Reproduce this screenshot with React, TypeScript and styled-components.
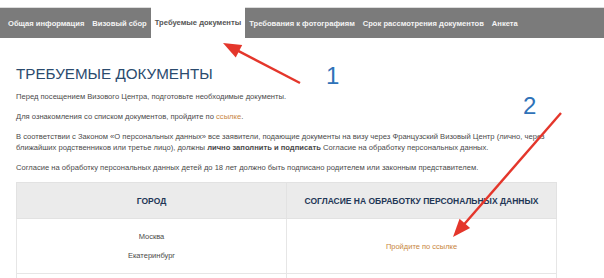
import React from 'react';
import styled, { createGlobalStyle } from 'styled-components';

const GlobalStyle = createGlobalStyle`
	body {
		margin: 0;
		background: #fff;
	}
`;

const Page = styled.div`
	position: relative;
	width: 604px;
	height: 278px;
	overflow: hidden;
	font-family: 'Liberation Sans', Arial, sans-serif;
`;

const TopStrip = styled.div`
	height: 7px;
	border-bottom: 1px solid #dcdcdc;
`;

const Nav = styled.nav`
	display: flex;
	height: 30px;
	padding-left: 4px;
	background: #7b7b7b;
`;

const Tab = styled.a<{ $active?: boolean }>`
	display: flex;
	align-items: center;
	padding: 0 4px;
	margin-top: ${({ $active }) => ($active ? '-1px' : '0')};
	height: ${({ $active }) => ($active ? '31px' : '30px')};
	background: ${({ $active }) => ($active ? '#fff' : 'transparent')};
	color: ${({ $active }) => ($active ? '#555' : '#f4f4f4')};
	font-size: 7.6px;
	font-weight: bold;
	white-space: nowrap;
	text-decoration: none;
`;

const Content = styled.main`
	padding: 0 16px;
	width: 541px;
`;

const Title = styled.h1`
	margin: 26px 0 7px;
	font-size: 15.2px;
	font-weight: normal;
	line-height: 20px;
	color: #2b4b6e;
`;

const Para = styled.p`
	margin: 0 0 9px;
	font-size: 7.6px;
	line-height: 11px;
	color: #4a4a4a;
`;

const Link = styled.a`
	color: #c8863e;
	text-decoration: none;
`;

const Table = styled.table`
	width: 541px;
	border-collapse: collapse;
	table-layout: fixed;
`;

const Th = styled.th`
	height: 35px;
	padding: 0 6px;
	background: #ebebeb;
	border: 1px solid #e2e2e2;
	font-size: 8.5px;
	font-weight: bold;
	color: #1f3756;
	text-align: center;
`;

const Td = styled.td`
	height: 54px;
	padding: 0 6px;
	border: 1px solid #e6e6e6;
	font-size: 7.5px;
	color: #4a4a4a;
	text-align: center;
	vertical-align: middle;
`;

const City = styled.div`
	line-height: 19px;
`;

const Overlay = styled.svg`
	position: absolute;
	top: 0;
	left: 0;
	pointer-events: none;
`;

const tabs = [
	'Общая информация',
	'Визовый сбор',
	'Требуемые документы',
	'Требования к фотографиям',
	'Срок рассмотрения документов',
	'Анкета',
];

const Arrow: React.FC<{ x1: number; y1: number; x2: number; y2: number }> = ({ x1, y1, x2, y2 }) => {
	const len = Math.hypot(x2 - x1, y2 - y1);
	const ux = (x2 - x1) / len;
	const uy = (y2 - y1) / len;
	const bx = x2 - ux * 18;
	const by = y2 - uy * 18;
	const px = -uy * 7;
	const py = ux * 7;
	return (
		<g>
			<line x1={x1} y1={y1} x2={bx + ux * 2} y2={by + uy * 2} stroke='#e4362b' strokeWidth='2.4' />
			<polygon points={`${x2},${y2} ${bx + px},${by + py} ${bx - px},${by - py}`} fill='#e4362b' />
		</g>
	);
};

const App: React.FC = () => (
	<Page>
		<GlobalStyle />
		<TopStrip />
		<Nav>
			{tabs.map((t) => (
				<Tab key={t} $active={t === 'Требуемые документы'}>
					{t}
				</Tab>
			))}
		</Nav>
		<Content>
			<Title>ТРЕБУЕМЫЕ ДОКУМЕНТЫ</Title>
			<Para>Перед посещением Визового Центра, подготовьте необходимые документы.</Para>
			<Para>
				Для ознакомления со списком документов, пройдите по <Link>ссылке</Link>.
			</Para>
			<Para>
				В соответствии с Законом «О персональных данных» все заявители, подающие документы на визу через
				Французский Визовый Центр (лично, через ближайших родственников или третье лицо), должны{' '}
				<b>лично заполнить и подписать</b> Согласие на обработку персональных данных.
			</Para>
			<Para>
				Согласие на обработку персональных данных детей до 18 лет должно быть подписано родителем или законным
				представителем.
			</Para>
			<Table>
				<thead>
					<tr>
						<Th>ГОРОД</Th>
						<Th>СОГЛАСИЕ НА ОБРАБОТКУ ПЕРСОНАЛЬНЫХ ДАННЫХ</Th>
					</tr>
				</thead>
				<tbody>
					<tr>
						<Td>
							<City>Москва</City>
							<City>Екатеринбург</City>
						</Td>
						<Td>
							<Link>Пройдите по ссылке</Link>
						</Td>
					</tr>
					<tr>
						<Td>
							<City>Санкт-Петербург</City>
						</Td>
						<Td>
							<Link>Пройдите по ссылке</Link>
						</Td>
					</tr>
				</tbody>
			</Table>
		</Content>
		<Overlay width='604' height='278' viewBox='0 0 604 278'>
			<Arrow x1={300} y1={83} x2={223} y2={43} />
			<Arrow x1={561} y1={113} x2={453} y2={237} />
			<text x='326' y='84' fontFamily='Liberation Sans, sans-serif' fontSize='24' fill='#2f72b8'>
				1
			</text>
			<text x='523' y='114' fontFamily='Liberation Sans, sans-serif' fontSize='24' fill='#2f72b8'>
				2
			</text>
		</Overlay>
	</Page>
);

export default App;
